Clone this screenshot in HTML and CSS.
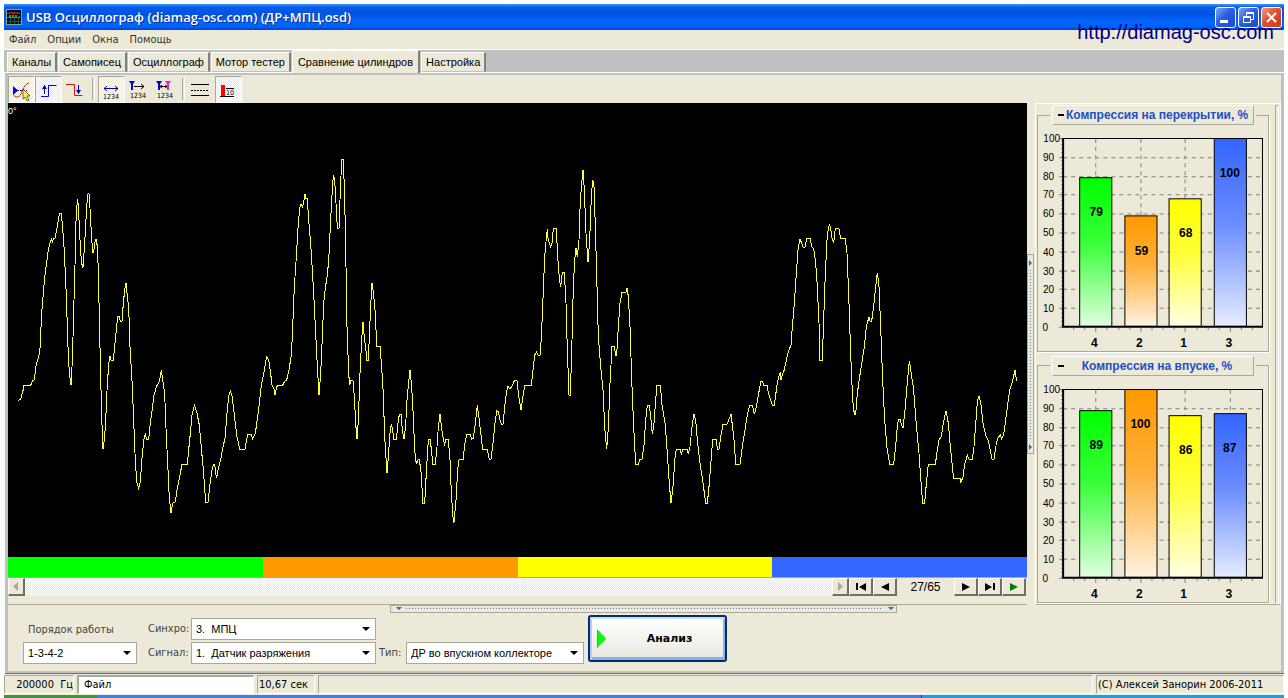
FILE: index.html
```html
<!DOCTYPE html>
<html lang="ru">
<head>
<meta charset="utf-8">
<title>USB Осциллограф</title>
<link rel="stylesheet" href="styles.css">
</head>
<body>
<div class="window">
  <header class="titlebar">
    <svg class="app-icon" width="16" height="16" viewBox="0 0 16 16" shape-rendering="crispEdges"><rect width="16" height="16" fill="#8a9a9a"/><rect x="1" y="1" width="14" height="14" fill="#021010"/><path d="M1 4h2v-1h3v1h2v-1h3v1h3" stroke="#d02020" fill="none"/><path d="M1 8.500h2v-2h1v2h2v-2h1v2h2v-2h1v2h3v-2" stroke="#20a050" fill="none"/><path d="M1 12.500h14M4.500 9v6M8.500 9v6M12.500 9v6" stroke="#185850" fill="none"/></svg>
    <h1 class="title">USB Осциллограф (diamag-osc.com) (ДР+МПЦ.osd)</h1>
    <div class="win-buttons">
      <button class="win-btn" aria-label="Свернуть"><svg width="19" height="19"><path d="M4 12h8v3h-8z" fill="#fff"/></svg></button>
      <button class="win-btn" aria-label="Восстановить"><svg width="19" height="19" fill="none" stroke="#fff"><path d="M7.500 8v-3.500h7v7h-3M7 5.500h8M4.500 8.500h7v6h-7zM4 9.500h8"/></svg></button>
      <button class="win-btn win-close" aria-label="Закрыть"><svg width="19" height="19"><path d="M5 5l9 9M14 5l-9 9" stroke="#fff" stroke-width="2.200"/></svg></button>
    </div>
    <a class="site-link" href="#">http://diamag-osc.com</a>
  </header>
  <nav class="menu">
    <button>Файл</button><button>Опции</button><button>Окна</button><button>Помощь</button>
  </nav>
  <div class="tabs" role="tablist">
    <button class="tab" role="tab">Каналы</button>
    <button class="tab" role="tab">Самописец</button>
    <button class="tab" role="tab">Осциллограф</button>
    <button class="tab" role="tab">Мотор тестер</button>
    <button class="tab tab-active" role="tab" aria-selected="true">Сравнение цилиндров</button>
    <button class="tab" role="tab">Настройка</button>
  </div>
  <main class="page">
    <div class="toolbar">
      <button class="tool pressed" aria-label="Курсор"><svg width="24" height="24"><path d="M4 9v9l5-4.500z" fill="#00f"/><path d="M8 13.500h10" stroke="#00c" stroke-dasharray="2 1"/><path d="M4 17c2 4 6 4 8 0s3-10 8-11" stroke="#d02020" fill="none"/><path d="M14 12v10l2-2 2 4 2-1-2-4h3z" fill="#ff0" stroke="#333" stroke-width=".7"/></svg></button>
      <button class="tool pressed" aria-label="Фронт"><svg width="24" height="24" fill="none" stroke="#00a"><path d="M5 19.500h7.500v-11h8" stroke="#00f"/><path d="M8.500 17v-9" /><path d="M6 12l2.500-4 2.500 4z" fill="#00a" stroke="none"/></svg></button>
      <button class="tool" aria-label="Спад"><svg width="24" height="24" fill="none"><path d="M3 7.500h8.500v11h8" stroke="#e01010"/><path d="M15.500 8v9" stroke="#00a"/><path d="M13 13h5l-2.500 4z" fill="#00a"/></svg></button>
      <span class="sep"></span>
      <button class="tool pressed" aria-label="Интервал"><svg width="24" height="24" fill="none" stroke="#00a"><path d="M5 11.500h14M8 9l-3 2.500 3 2.500M16 9l3 2.500-3 2.500"/><text class="digits" x="4" y="22">1234</text></svg></button>
      <button class="tool" aria-label="Маркер слева"><svg width="24" height="24" fill="none"><path d="M3 4h6l-2 3v6h-2v-6z" fill="#00f"/><path d="M8 9.500h10M15 7l3 2.500-3 2.500" stroke="#000"/><text class="digits" x="4" y="21">1234</text></svg></button>
      <button class="tool" aria-label="Два маркера"><svg width="24" height="24" fill="none"><path d="M3 4h6l-2 3v6h-2v-6z" fill="#00c"/><path d="M12 4h6l-2 3v6h-2v-6z" fill="#e020e0"/><path d="M7 9.500h7M9 8l-2 1.500 2 1.500M12 8l2 1.500-2 1.500" stroke="#000"/><text class="digits" x="4" y="21">1234</text></svg></button>
      <span class="sep"></span>
      <button class="tool" aria-label="Линии"><svg width="24" height="24" stroke="#000"><path d="M2 7.500h18M2 18.500h18"/><path d="M2 13.500h18" stroke-dasharray="2 1"/></svg></button>
      <button class="tool pressed" aria-label="Диаграмма"><svg width="24" height="24"><path d="M5 8h4v11h-4z" fill="red"/><path d="M4 19.500h14M10 11.500h8" stroke="#000"/><text class="digits" x="10" y="18">10</text></svg></button>
    </div>
    <div class="work">
      <section class="scope">
        <div class="plot">
          <span class="degree">0°</span>
          <svg class="wave" viewBox="0 0 3057 1362" preserveAspectRatio="none" aria-label="Осциллограмма">
            <g transform="translate(-24 -9)"><polyline points="55,901 61,899 63,893 70,868 71,856 92,856 98,842 103,840 108,797 117,766 120,745 125,640 128,604 134,532 138,502 145,450 150,428 155,416 157,428 160,416 165,414 170,390 175,362 178,341 184,341 188,385 192,440 197,540 200,620 204,740 208,820 213,856 216,800 219,710 222,600 225,495 227,385 230,325 233,296 235,320 238,380 242,460 247,501 249,501 254,430 257,375 261,310 264,281 267,281 270,325 274,400 278,457 281,457 284,430 289,416 293,450 295,520 298,650 301,790 305,950 309,1048 314,1010 318,940 322,850 327,785 330,768 333,780 340,780 344,740 350,680 353,650 358,650 361,663 366,663 370,610 374,570 378,548 382,590 386,620 390,740 397,860 401,960 405,1060 410,1145 416,1165 421,1145 427,1060 432,1018 436,1003 440,1017 446,1017 451,970 455,940 462,885 470,858 478,845 484,811 489,845 494,880 498,985 504,1110 508,1195 513,1240 518,1210 526,1205 532,1165 540,1125 546,1093 562,1093 566,1050 572,990 576,945 583,916 591,940 598,975 605,1055 611,1120 617,1208 624,1208 629,1160 636,1110 640,1093 644,1093 647,1118 650,1135 654,1110 662,1080 668,1045 675,1015 681,940 686,888 691,872 696,888 703,945 710,1005 719,1047 735,1047 743,1003 754,1003 758,1017 766,1000 773,950 778,910 784,855 792,815 800,768"/></g>
            <g transform="translate(726 -9)"><polyline points="50,768 57,785 62,820 66,855 73,868 75,885 80,860 84,856 98,856 104,843 110,840 117,810 124,765 128,690 131,600 135,530 139,470 144,385 149,325 153,311 158,322 162,300 165,281 167,296 172,296 176,360 182,430 187,510 192,600 197,700 202,800 207,885 212,820 217,710 221,610 226,565 231,530 236,485 240,400 245,300 250,225 254,240 258,310 262,385 267,385 270,300 275,179 280,179 284,290 288,500 291,680 296,820 299,855 302,842 309,842 313,890 317,970 321,1018 325,960 330,820 335,720 339,665 343,715 347,740 350,780 355,780 358,710 362,620 366,548 371,585 376,640 380,739 390,739 395,800 400,885 404,1010 411,1120 415,1070 420,1000 424,973 428,990 431,1018 439,1018 444,970 448,943 453,943 457,990 462,1018 467,975 471,900 476,845 480,811 485,860 490,950 494,1050 499,1093 504,1079 508,1079 513,1115 519,1210 524,1210 530,1100 535,1018 541,1018 545,1060 549,1093 556,1093 561,1040 565,980 570,943 575,985 580,1018 584,1033 588,1018 595,1018 600,1080 604,1180 609,1250 612,1268 618,1200 623,1110 627,1079 639,1079 645,1030 650,1003 661,1003 665,1018 670,1015 676,970 682,916 687,955 693,1005 698,1048 712,1048 718,1078 723,1078 729,1030 735,970 740,932 745,935 750,960 754,973 759,973 764,920 769,880 774,858 780,868 786,858 793,842"/></g>
            <g transform="translate(1506 -9)"><polyline points="13,842 21,842 25,880 33,931 38,895 44,856 64,856 68,820 74,765 80,755 84,766 90,766 94,715 98,620 104,470 108,425 112,386 114,415 118,430 122,442 126,430 130,386 139,386 143,470 148,535 152,560 157,518 163,518 168,610 172,750 177,886 181,886 186,720 190,560 194,480 198,443 202,471 207,420 211,300 216,240 219,209 223,270 228,400 234,487 239,420 244,290 248,239 252,260 256,380 261,560 265,710 272,800 279,870 284,980 290,1048 295,985 300,850 306,739 313,739 317,766 320,766 325,680 330,610 336,577 348,577 351,563 355,590 360,680 366,860 371,980 377,1093 385,1093 389,1078 396,1078 402,1035 407,960 412,916 418,916 422,950 427,1003 432,970 437,900 441,856 451,856 456,915 466,975 472,1060 478,1150 483,1210 489,1160 496,1060 500,1048 510,1048 514,1062 519,1048 531,1048 535,1062 540,1040 546,980 552,943 557,960 562,1020 570,1090 578,1140 587,1210 592,1210 598,1150 604,1070 608,1018 619,1018 622,1048 627,1048 634,1000 639,973 651,973 657,957 663,943 667,975 673,1030 677,1093 690,1093 697,1040 705,990 712,945 719,916 727,916 733,943 739,920 746,880 753,843 758,843 760,856 771,856 775,880 782,900 787,916"/></g>
            <g transform="translate(2271 -9)"><polyline points="22,916 28,916 34,870 38,843 46,815 48,840 52,825 57,812 62,790 70,755 78,735 82,680 88,610 94,520 99,450 105,416 110,430 114,442 120,442 125,416 136,416 140,440 146,445 152,490 157,560 162,670 165,780 172,780 176,660 181,520 186,420 190,386 194,372 197,386 201,415 206,428 211,386 222,386 227,415 241,415 246,460 251,580 257,760 263,900 268,943 272,943 277,880 284,830 292,780 298,740 304,680 312,651 315,663 320,663 326,620 332,560 337,518 342,560 347,680 353,840 359,960 366,1045 374,1093 386,1093 392,1040 397,980 400,958 406,958 409,973 414,985 420,930 426,860 433,782 438,815 446,870 454,975 462,1060 468,1145 473,1210 479,1210 485,1140 490,1093 511,1093 517,1050 522,1020 529,1010 535,970 543,932 550,970 556,1040 562,1100 566,1135 585,1135 587,1150 594,1130 599,1093 607,1065 612,1078 622,1078 627,1040 633,960 637,905 642,887 648,915 654,970 662,1005 669,1020 676,1050 681,1078 687,1078 694,1030 700,1012 706,1005 710,1017 716,1003 722,960 728,915 734,870 741,850 750,811 755,842"/></g>
          </svg>
        </div>
        <div class="cylinders"><i class="green"></i><i class="orange"></i><i class="yellow"></i><i class="blue"></i></div>
        <div class="scroll-row">
          <button class="nav-btn end" aria-label="Влево"><svg width="10" height="10"><path d="M7 0v9l-5-4.500z" fill="#aca899"/></svg></button>
          <div class="track"></div>
          <button class="nav-btn end" aria-label="Вправо"><svg width="10" height="10"><path d="M3 0v9l5-4.500z" fill="#aca899"/></svg></button>
          <button class="nav-btn" aria-label="В начало"><svg width="12" height="10"><path d="M1 1h2v7h-2zM11 1v8l-7-4z"/></svg></button>
          <button class="nav-btn" aria-label="Назад"><svg width="12" height="10"><path d="M10 1v8l-8-4z"/></svg></button>
          <span class="counter">27/65</span>
          <button class="nav-btn" aria-label="Вперёд"><svg width="12" height="10"><path d="M2 1v8l8-4z"/></svg></button>
          <button class="nav-btn" aria-label="В конец"><svg width="12" height="10"><path d="M1 1v8l7-4zM9 1h2v7h-2z"/></svg></button>
          <button class="nav-btn" aria-label="Воспроизвести"><svg width="12" height="10"><path d="M2 1v8l8-4z" fill="#007a00"/></svg></button>
        </div>
      </section>
      <div class="splitter-v"><svg width="5" height="198"><path d="M1 5v6l3-3zM1 189v6l3-3z" fill="#316ac5"/><path d="M2.500 15v170" stroke="#5a7cb8" stroke-dasharray="1 2"/></svg></div>
      <aside class="side">
        <div class="groups">
          <fieldset class="group">
            <legend><button class="group-btn"><span class="minus"></span><span class="caption">Компрессия на перекрытии, %</span></button></legend>
            <svg class="chart" viewBox="0 0 229 225">
              <defs>
                <linearGradient id="g4" x2="0" y2="1"><stop stop-color="#0f0"/><stop offset=".45" stop-color="#3cff3c"/><stop offset="1" stop-color="#e0ffe0"/></linearGradient>
                <linearGradient id="g2" x2="0" y2="1"><stop stop-color="#f90"/><stop offset=".45" stop-color="#ffb03c"/><stop offset="1" stop-color="#fff2e0"/></linearGradient>
                <linearGradient id="g1" x2="0" y2="1"><stop stop-color="#ff0"/><stop offset=".45" stop-color="#ffff3c"/><stop offset="1" stop-color="#ffffe6"/></linearGradient>
                <linearGradient id="g3" x2="0" y2="1"><stop stop-color="#36f"/><stop offset=".45" stop-color="#6a8cff"/><stop offset="1" stop-color="#e6ecff"/></linearGradient>
                <g id="frame">
                  <path class="grid" d="M25 32.500h198M25 51.500h198M25 69.500h198M25 88.500h198M25 107.500h198M25 126.500h198M25 145.500h198M25 163.500h198M25 182.500h198M57.500 14v187M102.500 14v187M146.500 14v187M191.500 14v187"/>
                  <path class="ticks" d="M21 13.500h4M21 32.500h4M21 51.500h4M21 69.500h4M21 88.500h4M21 107.500h4M21 126.500h4M21 145.500h4M21 163.500h4M21 182.500h4M21 201.500h4M57.500 202v4M102.500 202v4M146.500 202v4M191.500 202v4M35.500 202v2M46.500 202v2M68.500 202v2M80.500 202v2M91.500 202v2M113.500 202v2M124.500 202v2M135.500 202v2M158.500 202v2M169.500 202v2M180.500 202v2M202.500 202v2M213.500 202v2"/>
                  <path class="minor" d="M23.500 15v186"/>
                  <path class="outline" d="M25 13.500h198.500v188"/>
                </g>
                <path id="axes" class="axes" d="M25 13v188h199"/>
              </defs>
              <use href="#frame"/>
              <g class="bars"><rect x="41.500" y="52.500" width="32" height="148" fill="url(#g4)"/><rect x="86.500" y="90.500" width="32" height="110" fill="url(#g2)"/><rect x="130.500" y="73.500" width="32" height="127" fill="url(#g1)"/><rect x="175.500" y="13.500" width="32" height="187" fill="url(#g3)"/></g>
              <use href="#axes"/>
              <g class="scale"><text x="22" y="17">100</text><text x="16" y="36">90</text><text x="16" y="55">80</text><text x="16" y="73">70</text><text x="16" y="92">60</text><text x="16" y="111">50</text><text x="16" y="130">40</text><text x="16" y="149">30</text><text x="16" y="167">20</text><text x="16" y="186">10</text><text x="10" y="205">0</text></g>
              <g class="values"><text x="58" y="91">79</text><text x="103" y="129">59</text><text x="147" y="112">68</text><text x="191" y="52">100</text></g>
              <g class="values"><text x="56" y="221">4</text><text x="101" y="221">2</text><text x="145" y="221">1</text><text x="190" y="221">3</text></g>
            </svg>
          </fieldset>
          <fieldset class="group">
            <legend><button class="group-btn"><span class="minus"></span><span class="caption">Компрессия на впуске, %</span></button></legend>
            <svg class="chart" viewBox="0 0 229 225">
              <use href="#frame"/>
              <g class="bars"><rect x="41.500" y="34.500" width="32" height="166" fill="url(#g4)"/><rect x="86.500" y="13.500" width="32" height="187" fill="url(#g2)"/><rect x="130.500" y="39.500" width="32" height="161" fill="url(#g1)"/><rect x="175.500" y="37.500" width="32" height="163" fill="url(#g3)"/></g>
              <use href="#axes"/>
              <g class="scale"><text x="22" y="17">100</text><text x="16" y="36">90</text><text x="16" y="55">80</text><text x="16" y="73">70</text><text x="16" y="92">60</text><text x="16" y="111">50</text><text x="16" y="130">40</text><text x="16" y="149">30</text><text x="16" y="167">20</text><text x="16" y="186">10</text><text x="10" y="205">0</text></g>
              <g class="values"><text x="58" y="73">89</text><text x="102" y="52">100</text><text x="147" y="78">86</text><text x="191" y="76">87</text></g>
              <g class="values"><text x="56" y="221">4</text><text x="101" y="221">2</text><text x="145" y="221">1</text><text x="190" y="221">3</text></g>
            </svg>
          </fieldset>
        </div>
        <div class="grip"></div>
      </aside>
    </div>
    <div class="splitter-row"><div class="splitter-h"><svg width="504" height="5"><path d="M5 1h6l-3 3zM497 1h6l-3 3z" fill="#316ac5"/><path d="M15 2.500h475" stroke="#5a7cb8" stroke-dasharray="1 2"/></svg></div></div>
    <form class="controls">
      <div class="order">
        <label for="order">Порядок работы</label>
        <span class="combo"><select id="order"><option>1-3-4-2</option></select></span>
      </div>
      <div class="signals">
        <label for="sync">Синхро:</label>
        <span class="combo"><select id="sync"><option>3.&nbsp; МПЦ</option></select></span>
        <label for="signal">Сигнал:</label>
        <span class="combo"><select id="signal"><option>1.&nbsp; Датчик разряжения</option></select></span>
      </div>
      <div class="type">
        <label for="type">Тип:</label>
        <span class="combo"><select id="type"><option>ДР во впускном коллекторе</option></select></span>
      </div>
      <button type="button" class="analyze"><svg width="12" height="20"><path d="M1 1v18l9-9z" fill="#0f0"/><path d="M1.500 19v-18l8 8" fill="none" stroke="#7a8a7a"/></svg><span>Анализ</span></button>
    </form>
  </main>
  <footer class="status">
    <span class="cell rate">200000&nbsp; Гц</span>
    <span class="cell file">Файл</span>
    <span class="cell time">10,67 сек</span>
    <span class="cell spare"></span>
    <span class="cell copy">(C) Алексей Занорин 2006-2011</span>
  </footer>
  <div class="taskbar"><i class="start"></i><i class="tray"></i></div>
</div>
</body>
</html>
```
FILE: styles.css
```css
* { box-sizing: border-box; }
body { margin: 0; background: #fff; color: #000; font: 11px/14px "DejaVu Sans Condensed", "DejaVu Sans", sans-serif; }
button { padding: 0; border: 0; background: none; color: inherit; font: inherit; }
svg { display: block; }
.window { display: flex; flex-direction: column; height: 100vh; padding: 4px 4px 0; }

.titlebar { position: relative; display: flex; flex: none; align-items: center; gap: 4px; height: 26px; padding: 0 2px; background: linear-gradient(#3d95ff, #0a5ce8 12%, #0054e3 40%, #0066ff 70%, #0062f8 88%, #003dd0); }
.title { flex: 1; margin: 0; color: #fff; font: 600 13px/20px "Open Sans", "Noto Sans", sans-serif; text-shadow: 1px 1px #0a2a90; }
.win-buttons { display: flex; gap: 2px; }
.win-btn { width: 21px; height: 21px; border: 1px solid #fff; border-radius: 3px; background: linear-gradient(135deg, #7ea6f4, #2c5ee0 45%, #1a4ad0); }
.win-close { background: linear-gradient(135deg, #f0a080, #e05030 45%, #c83c14); }
.site-link { position: absolute; top: 16px; right: 10px; color: #000080; font: 20px/24px "Liberation Sans", sans-serif; text-decoration: none; }

.menu { display: flex; flex: none; gap: 11px; height: 19px; padding: 0 5px; background: #ece9d8; color: #333; }
.tabs { display: flex; flex: none; align-items: flex-end; gap: 1px; height: 24px; padding-left: 3px; border-top: 1px solid #fff; border-bottom: 1px solid #fff; background: #c0c0c0; font: 11px/16px "Liberation Sans", sans-serif; }
.tab { height: 20px; padding: 0 4px; border: solid; border-width: 1px 2px 1px 1px; border-color: #fff #808080 #c0c0c0 #fff; background: #ece9d8; }
.tab-active { align-self: stretch; height: 23px; margin-bottom: -1px; padding: 0 5px; border-bottom: 0; }

.page { display: flex; flex: 1; flex-direction: column; min-height: 0; border: solid #c0c0c0; border-width: 2px 3px 2px 3px; margin-left: 1px; background: #ece9d8; box-shadow: 0 1px #716f64; }
.toolbar { display: flex; flex: none; align-items: center; height: 28px; }
.tool { width: 27px; height: 27px; padding: 1px; }
.pressed { border: 1px solid; border-color: #aca899 #fff #fff #aca899; background: repeating-conic-gradient(#fff 0 25%, #ece9d8 0 50%) 0 0 / 2px 2px; padding: 0; }
.sep { width: 3px; height: 22px; margin: 0 3px; border-left: 1px solid #aca899; border-right: 1px solid #fff; }
.digits { fill: #000; stroke: none; font: 7px "DejaVu Sans Condensed", sans-serif; }

.work { display: flex; flex: 1; min-height: 0; }
.scope { display: flex; flex: 1; flex-direction: column; min-width: 0; border-bottom: 1px solid #aca899; }
.plot { position: relative; flex: 1; min-height: 0; background: #000; }
.degree { position: absolute; top: 2px; left: 0; color: #fff; font: 9px/12px "Liberation Sans", sans-serif; }
.wave { position: absolute; inset: 0; width: 100%; height: 100%; }
.wave polyline { fill: none; stroke: #ff3; stroke-width: 1px; vector-effect: non-scaling-stroke; shape-rendering: crispEdges; }
.cylinders { display: flex; flex: none; height: 20px; }
.cylinders i { flex: 1; }
.green { background: #0f0; }
.orange { background: #f90; }
.yellow { background: #ff0; }
.blue { background: #36f; }
.scroll-row { display: flex; flex: none; align-items: flex-start; height: 27px; padding-right: 1px; border-top: 1px solid #aca899; }
.nav-btn { display: grid; place-items: center; width: 24px; height: 18px; border: solid; border-width: 1px 2px 2px 1px; border-color: #fff #716f64 #716f64 #fff; background: #ece9d8; }
.end { width: 17px; }
.track { flex: 1; height: 18px; background: repeating-conic-gradient(#fff 0 25%, #ece9d8 0 50%) 0 0 / 2px 2px; }
.counter { width: 57px; font: 12px/18px "Liberation Sans", sans-serif; text-align: center; }
.splitter-v { flex: none; align-self: center; width: 7px; height: 200px; border: 1px solid #aca899; }
.side { display: flex; flex: none; align-items: stretch; gap: 6px; width: 246px; margin-left: 1px; padding: 1px 1px 0 1px; border: 1px solid; border-color: #fff #fff #aca899 #fff; }
.groups { display: flex; flex: 1; flex-direction: column; gap: 4px; }
.group { min-width: 0; margin: 0; padding: 0; border: 1px solid #aca899; box-shadow: 1px 1px #fff; }
.group legend { width: 206px; margin: 0 auto; padding: 0 2px; }
.group-btn { display: flex; align-items: center; gap: 2px; width: 100%; height: 20px; padding: 0 5px; border: 1px solid; border-color: #fff #aca899 #aca899 #fff; }
.minus { flex: none; width: 6px; height: 2px; background: #000; }
.caption { flex: 1; color: #1c50c8; font: bold 12px/16px "Liberation Sans", sans-serif; text-align: center; white-space: nowrap; }
.chart { width: 100%; height: auto; }
.chart .grid { stroke: #808080; stroke-dasharray: 4 4; }
.chart .ticks { stroke: #808080; }
.chart .minor { stroke: #808080; stroke-dasharray: 1 3; }
.chart .outline { fill: none; stroke: #000; }
.chart .axes { fill: none; stroke: #000; stroke-width: 2px; }
.bars rect { stroke: #000; }
.scale { font: 10px "Liberation Sans", sans-serif; text-anchor: end; }
.values { font: bold 12px "Liberation Sans", sans-serif; text-anchor: middle; }
.grip { width: 4px; border: 1px solid; border-color: #aca899 #fff #fff #aca899; }

.splitter-row { display: flex; flex: none; justify-content: flex-start; padding-left: 30%; }
.splitter-h { width: 507px; height: 8px; border: 1px solid #aca899; }
.controls { display: flex; flex: none; align-items: flex-start; gap: 11px; height: 58px; padding: 2px 15px; color: #444; }
.combo { position: relative; display: block; min-width: 0; }
.combo::after { content: ""; position: absolute; top: 9px; right: 6px; border: solid transparent; border-width: 4px 4px 0; border-top-color: #000; pointer-events: none; }
.combo select { display: block; width: 100%; height: 22px; padding: 0 18px 0 4px; border: 1px solid #aca899; border-radius: 0; appearance: none; background: #fff; color: #000; font: 11px/20px "Liberation Sans", sans-serif; }
.order { display: grid; width: 114px; row-gap: 5px; padding-top: 8px; }
.order label { padding-left: 5px; }
.signals { display: grid; grid-template-columns: 43px 185px; align-items: center; gap: 2px 0; padding-top: 3px; }
.type { display: grid; grid-template-columns: 27px 178px; align-items: center; margin-left: -8px; padding-top: 27px; }
.analyze { display: flex; align-items: center; width: 139px; height: 47px; margin-left: -7px; padding: 0 6px; border: 2px solid #002d6e; border-radius: 3px; background: linear-gradient(#fff, #e8e8e0); box-shadow: inset 0 2px #cddcf4, inset 2px 0 #b4ccf0, inset -2px -3px #8cb0e8; color: #000; font: bold 11px/14px "DejaVu Sans", sans-serif; }
.analyze span { flex: 1; padding-left: 12px; text-align: center; }

.status { display: flex; flex: none; gap: 3px; height: 20px; margin-top: 1px; padding-top: 1px; background: #ece9d8; line-height: 17px; }
.cell { border: 1px solid; border-color: #aca899 #fff #fff #aca899; white-space: nowrap; }
.rate { width: 70px; text-align: right; }
.file { width: 177px; padding-left: 5px; border-width: 2px 1px 1px 2px; background: #fff; line-height: 16px; }
.time { width: 58px; padding-left: 1px; }
.spare { flex: 1; }
.copy { width: 188px; padding-left: 1px; }
.taskbar { display: flex; flex: none; justify-content: space-between; height: 4px; border-top: 1px solid #ece9d8; background: #3a80f0; }
.start { width: 93px; border-radius: 0 4px 0 0; background: #3c963c; }
.tray { width: 363px; border-left: 1px solid #0a50a0; background: #18a0f0; }
```
